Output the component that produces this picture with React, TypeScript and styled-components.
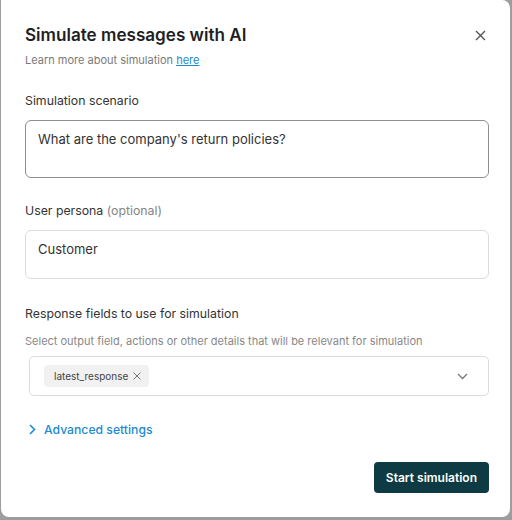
import React from "react";
import styled, { createGlobalStyle } from "styled-components";

const Global = createGlobalStyle`
    html, body {
        margin: 0;
        background: #9d9d9d;
        font-family: Inter, "Noto Sans", "Liberation Sans", sans-serif;
    }
`

const Dialog = styled.div`
    box-sizing: border-box;
    width: 509px;
    height: 517px;
    margin-left: 1px;
    background: #fff;
    border-radius: 0 8px 8px 8px;
    padding: 21px 21px 0 24px;
    display: flex;
    flex-direction: column;
`

const Header = styled.div`
    display: flex;
    justify-content: space-between;
    align-items: flex-start;
`

const Title = styled.h1`
    margin: 2px 0 0;
    font-size: 17.1px;
    font-weight: 600;
    color: #1f1f1f;
    line-height: 24px;
`

const Subtitle = styled.p`
    margin: 5px 0 0;
    font-size: 11px;
    color: #7a7a7a;
    line-height: 16px;
`

const Link = styled.a`
    color: #1b8bd1;
    text-decoration: underline;
`

const CloseButton = styled.button`
    border: none;
    background: none;
    padding: 0;
    margin: 7px 2px 0 0;
    width: 14px;
    height: 14px;
    display: flex;
    align-items: center;
    justify-content: center;
    cursor: pointer;
`

const Field = styled.div<{ $top: number }>`
    margin-top: ${props => props.$top}px;
    display: flex;
    flex-direction: column;
`

const Label = styled.label`
    font-size: 12.3px;
    color: #333;
    line-height: 18px;
`

const Muted = styled.span`
    color: #858585;
`

const Hint = styled.p`
    margin: 10px 0 0;
    font-size: 11px;
    color: #888;
    line-height: 16px;
`

const Box = styled.div<{ $height: number; $dark?: boolean }>`
    box-sizing: border-box;
    margin-top: 10px;
    height: ${props => props.$height}px;
    border: 1px solid ${props => props.$dark ? '#8f8f8f' : '#dcdcdc'};
    border-radius: 6px;
    padding: 9px 12px;
    font-size: 13px;
    color: #333;
    line-height: 18px;
`

const Select = styled.div`
    box-sizing: border-box;
    margin: 7px 0 0 4px;
    height: 40px;
    border: 1px solid #dcdcdc;
    border-radius: 5px;
    padding: 0 20px 0 14px;
    display: flex;
    align-items: center;
    justify-content: space-between;
`

const Chip = styled.span`
    display: inline-flex;
    align-items: center;
    gap: 5px;
    height: 22px;
    padding: 0 8px 0 10px;
    background: #f1f1f1;
    border-radius: 4px;
    font-size: 10px;
    color: #444;
`

const Advanced = styled.button`
    margin: 26px 0 0 4px;
    padding: 0;
    border: none;
    background: none;
    display: flex;
    align-items: center;
    gap: 8px;
    font-family: inherit;
    font-size: 12.2px;
    font-weight: 500;
    color: #1b8bd1;
    cursor: pointer;
    align-self: flex-start;
`

const Footer = styled.div`
    margin-top: 25px;
    display: flex;
    justify-content: flex-end;
`

const Primary = styled.button`
    height: 31px;
    padding: 0 12px;
    border: none;
    border-radius: 4px;
    background: #0d3a43;
    color: #fff;
    font-family: inherit;
    font-size: 12px;
    font-weight: 600;
    cursor: pointer;
`

export default function App() {
    return (
        <>
            <Global />
            <Dialog>
                <Header>
                    <div>
                        <Title>Simulate messages with AI</Title>
                        <Subtitle>Learn more about simulation <Link href="#">here</Link></Subtitle>
                    </div>
                    <CloseButton aria-label="Close">
                        <svg width="11" height="11" viewBox="0 0 11 11">
                            <path d="M1 1L10 10M10 1L1 10" stroke="#555" strokeWidth="1.4" />
                        </svg>
                    </CloseButton>
                </Header>

                <Field $top={24}>
                    <Label>Simulation scenario</Label>
                    <Box $height={58} $dark>What are the company's return policies?</Box>
                </Field>

                <Field $top={24}>
                    <Label>User persona <Muted>(optional)</Muted></Label>
                    <Box $height={49}>Customer</Box>
                </Field>

                <Field $top={26}>
                    <Label>Response fields to use for simulation</Label>
                    <Hint>Select output field, actions or other details that will be relevant for simulation</Hint>
                    <Select>
                        <Chip>
                            latest_response
                            <svg width="8" height="8" viewBox="0 0 8 8">
                                <path d="M0.5 0.5L7.5 7.5M7.5 0.5L0.5 7.5" stroke="#777" strokeWidth="1" />
                            </svg>
                        </Chip>
                        <svg width="11" height="7" viewBox="0 0 11 7">
                            <path d="M1 1L5.5 5.5L10 1" stroke="#777" strokeWidth="1.3" fill="none" />
                        </svg>
                    </Select>
                </Field>

                <Advanced>
                    <svg width="7" height="11" viewBox="0 0 7 11">
                        <path d="M1 1L5.5 5.5L1 10" stroke="#1b8bd1" strokeWidth="1.6" fill="none" />
                    </svg>
                    Advanced settings
                </Advanced>

                <Footer>
                    <Primary>Start simulation</Primary>
                </Footer>
            </Dialog>
        </>
    )
}
